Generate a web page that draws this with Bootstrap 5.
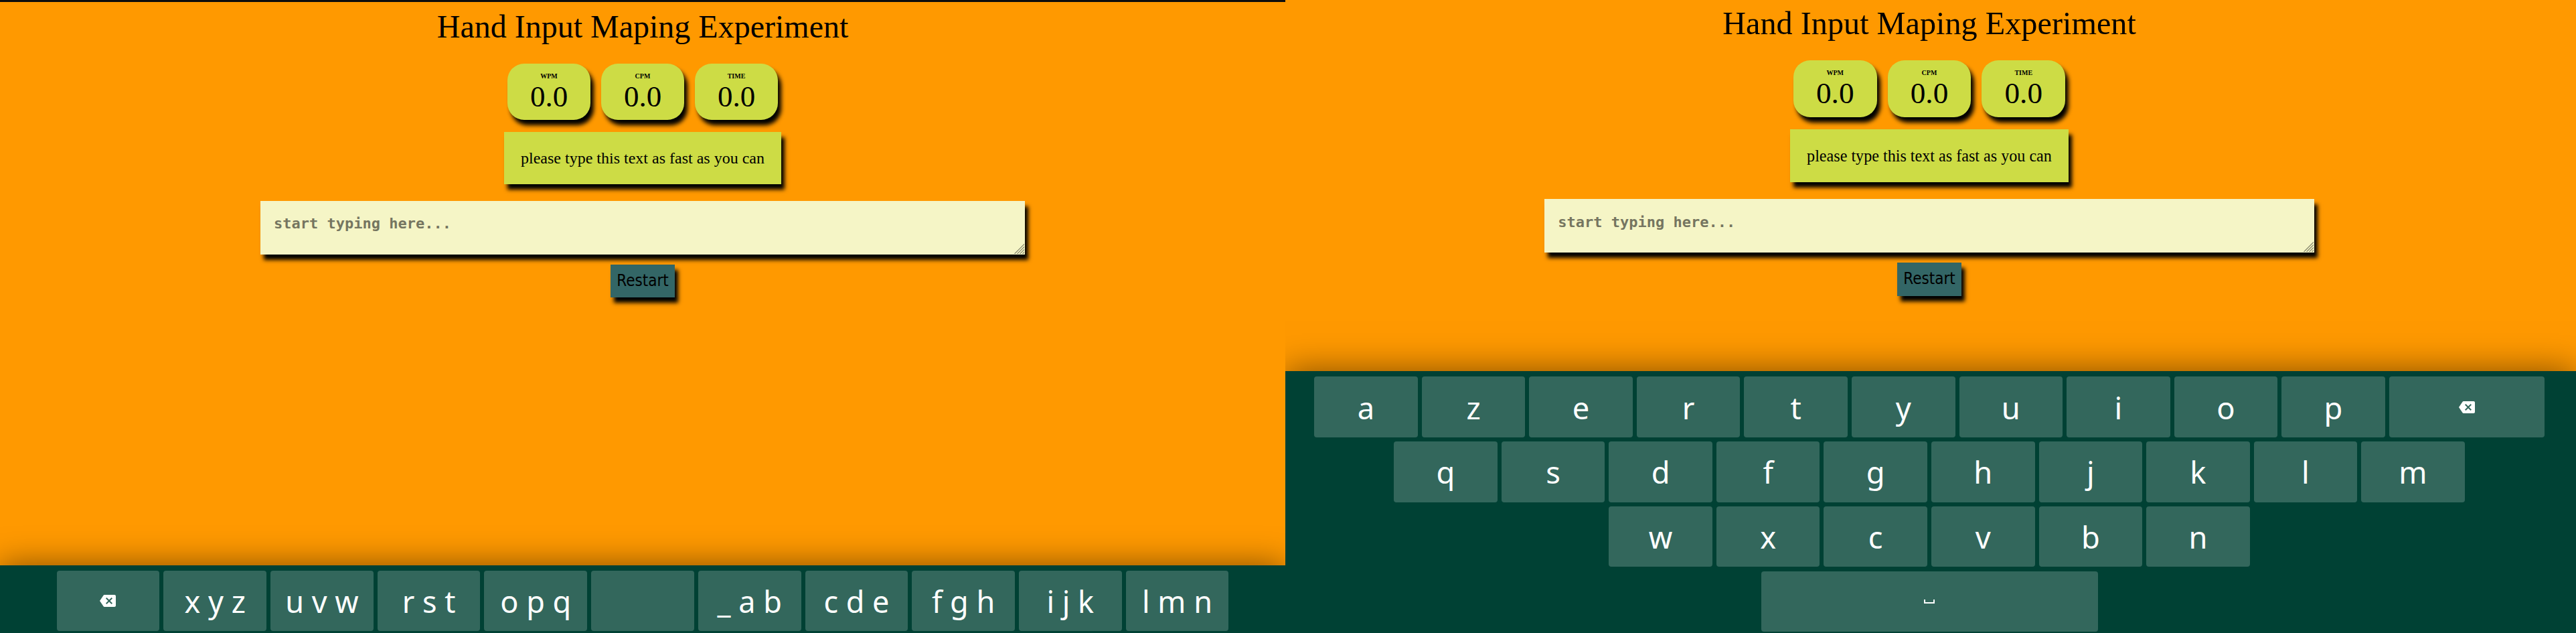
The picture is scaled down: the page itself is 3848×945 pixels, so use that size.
<!DOCTYPE html>
<html lang="en">
<head>
<meta charset="utf-8">
<title>Hand Input Maping Experiment</title>
<link href="https://cdn.jsdelivr.net/npm/bootstrap@5.3.0/dist/css/bootstrap.min.css" rel="stylesheet">
<style>
:root{--k:1}
body{background:#ff9900;color:#000;font-family:"Liberation Serif",serif;width:3848px;height:945px;overflow:hidden}
.pane{--k:1;height:945px;width:1920px;background:#ff9900}
.pane-l{border-top:3px solid #0d0d0d}
.pane-r{--k:1.0055;width:1928px;padding-right:4px}
.headline{font-size:calc(48px*var(--k));line-height:56px;padding-top:9px;margin:0}
.pane-r .headline{padding-top:7px}
.drop{box-shadow:5px 8px 6px #000}
.stats{margin-top:27px;gap:calc(16px*var(--k))}
.pane-r .stats{margin-top:27.3px}
.stat{width:calc(124px*var(--k));height:calc(84px*var(--k));border-radius:25px;background:#cddc45;padding-top:13px}
.stat b{font-size:10px;line-height:11px;display:block}
.stat span{font-size:calc(45px*var(--k));line-height:50px;display:block}
.prompt{margin-top:18px;width:calc(414px*var(--k));height:calc(78px*var(--k));background:#cddc45;font-size:calc(24px*var(--k))}
.pane-r .prompt{margin-top:18.5px;padding-top:1.500px}
.entry-wrap{margin-top:25px;width:1142px;height:80px}
.pane-r .entry-wrap{width:1149.4px;height:80.7px}
.entry{background:#f5f5c6;border:0;border-radius:0;padding:16px 20px;font:bold 22px/36px "DejaVu Sans Mono",monospace;resize:none;overflow:hidden;outline:0}
.pane-r .entry{padding-top:17px}
.entry::placeholder{color:#757560;opacity:1}
.grip{right:1px;bottom:1px;width:15px;height:15px;stroke:#84846a;stroke-width:1.2;fill:none}
.restart{margin-top:15px;width:calc(96px*var(--k));height:calc(49px*var(--k));background:#336666;border:0;border-radius:0;padding:0;color:#000;font:24px/49px "DejaVu Sans Condensed","DejaVu Sans",sans-serif;font-stretch:condensed}
.keyboard{background:#004134;box-shadow:0 0 50px rgba(0,0,0,.5);padding-top:8px;gap:6.3px;color:#fff;font:calc(45px*var(--k))/1 "Noto Sans",sans-serif}
.pane-l .keyboard{height:101px}
.pane-r .keyboard{height:390.6px;width:1928px;margin-right:-4px;padding-right:4px}
.keys{gap:6.03px}
.key{width:calc(153.7px*var(--k));height:calc(90px*var(--k));border-radius:4px;background:rgba(255,255,255,.2);padding-top:1px;white-space:pre}
.key.icon-key{padding-top:0}
.key-wide{width:232px}
.key-space{width:503px}
.key svg{width:24px;height:24px;fill:#fff}
</style>
</head>
<body class="d-flex">
<section class="pane pane-l d-flex flex-column align-items-center flex-shrink-0 overflow-hidden text-center">
  <h1 class="headline fw-normal">Hand Input Maping Experiment</h1>
  <div class="stats d-flex">
    <div class="stat drop"><b>WPM</b><span>0.0</span></div>
    <div class="stat drop"><b>CPM</b><span>0.0</span></div>
    <div class="stat drop"><b>TIME</b><span>0.0</span></div>
  </div>
  <div class="prompt drop d-flex align-items-center justify-content-center">please type this text as fast as you can</div>
  <div class="entry-wrap drop position-relative">
    <textarea class="entry d-block w-100 h-100" placeholder="start typing here..."></textarea>
    <svg class="grip position-absolute" viewBox="0 0 15 15"><path d="M0.500 15 15 .5M4.500 15 15 4.500M8.500 15 15 8.500M12.500 15 15 12.500"/></svg>
  </div>
  <button class="restart drop">Restart</button>
  <div class="keyboard mt-auto w-100 d-flex flex-column align-items-center" data-rows="<|x y z|u v w|r s t|o p q||_ a b|c d e|f g h|i j k|l m n"></div>
</section>
<section class="pane pane-r d-flex flex-column align-items-center flex-shrink-0 overflow-hidden text-center">
  <h1 class="headline fw-normal">Hand Input Maping Experiment</h1>
  <div class="stats d-flex">
    <div class="stat drop"><b>WPM</b><span>0.0</span></div>
    <div class="stat drop"><b>CPM</b><span>0.0</span></div>
    <div class="stat drop"><b>TIME</b><span>0.0</span></div>
  </div>
  <div class="prompt drop d-flex align-items-center justify-content-center">please type this text as fast as you can</div>
  <div class="entry-wrap drop position-relative">
    <textarea class="entry d-block w-100 h-100" placeholder="start typing here..."></textarea>
    <svg class="grip position-absolute" viewBox="0 0 15 15"><path d="M0.500 15 15 .5M4.500 15 15 4.500M8.500 15 15 8.500M12.500 15 15 12.500"/></svg>
  </div>
  <button class="restart drop">Restart</button>
  <div class="keyboard mt-auto align-self-start flex-shrink-0 d-flex flex-column align-items-center" data-rows="a|z|e|r|t|y|u|i|o|p|<<;q|s|d|f|g|h|j|k|l|m;w|x|c|v|b|n;space"></div>
</section>
<script src="https://cdn.jsdelivr.net/npm/bootstrap@5.3.0/dist/js/bootstrap.bundle.min.js"></script>
<script>
const backspace='<svg viewBox="0 0 24 24"><path d="M22 3H7c-.69 0-1.23.35-1.59.88L0 12l5.41 8.11c.36.53.9.89 1.59.89h15c1.1 0 2-.9 2-2V5c0-1.100-.9-2-2-2zm-3 12.590L17.590 17 14 13.410 10.410 17 9 15.590 12.590 12 9 8.410 10.410 7 14 10.590 17.590 7 19 8.410 15.410 12 19 15.590z"/></svg>';
const spaceBar='<svg viewBox="0 0 24 24"><path d="M18 9v4H6V9H4v6h16V9z"/></svg>';
const special={'<':['',backspace],'<<':['key-wide',backspace],'space':['key-space',spaceBar]};
document.querySelectorAll('.keyboard').forEach(board=>{
  board.dataset.rows.split(';').forEach(line=>{
    const row=document.createElement('div');
    row.className='keys d-flex';
    line.split('|').forEach(label=>{
      const key=document.createElement('div');
      key.className='key d-flex align-items-center justify-content-center flex-shrink-0';
      if(special[label]){
        key.className+=' icon-key '+special[label][0];
        key.innerHTML=special[label][1];
      }else key.textContent=label;
      row.append(key);
    });
    board.append(row);
  });
});
</script>
</body>
</html>
